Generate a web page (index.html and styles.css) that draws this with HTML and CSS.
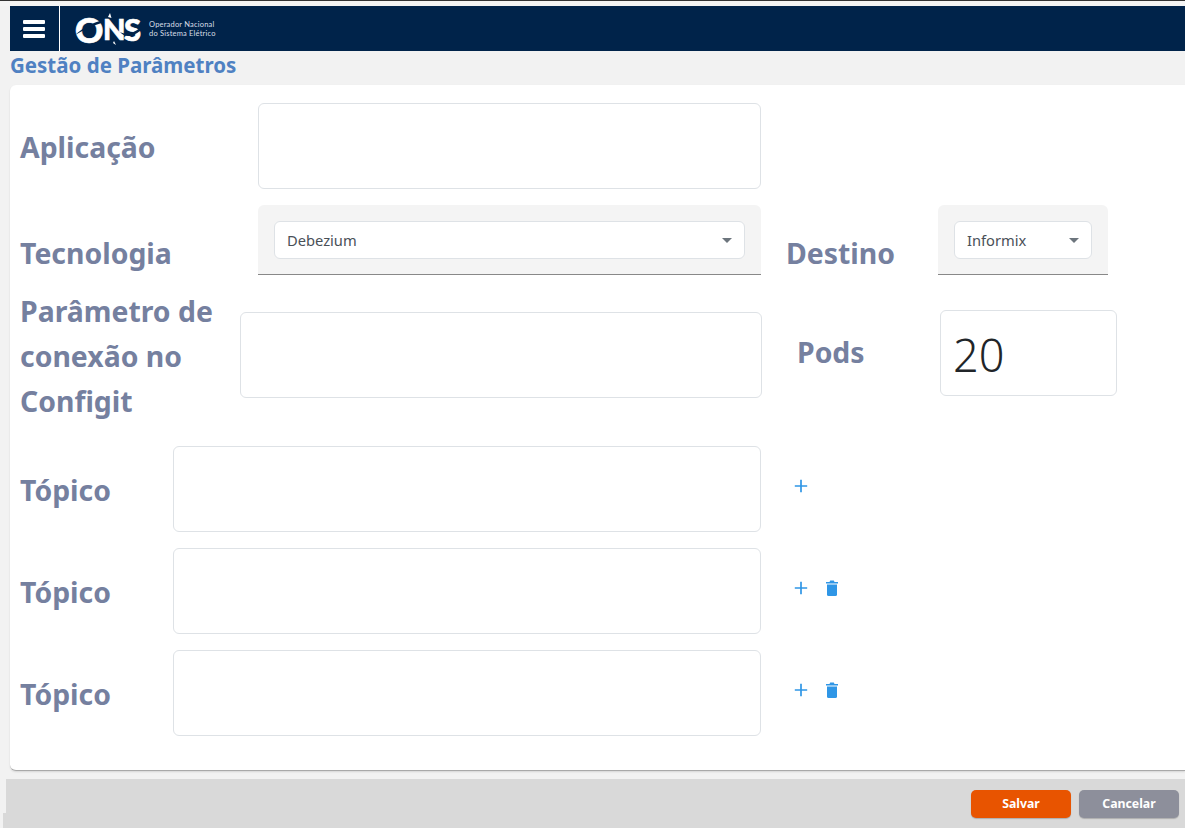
FILE: index.html
```html
<!DOCTYPE html>
<html lang="pt-BR">
<head>
<meta charset="utf-8">
<title>Gestão de Parâmetros</title>
<link rel="stylesheet" href="styles.css">
</head>
<body>
<div class="topline"></div>
<header class="navbar">
  <button class="menu-btn" aria-label="Menu">
    <svg width="22" height="18" viewBox="0 0 22 18"><rect y="0" width="22" height="4" rx="1" fill="#fff"/><rect y="7" width="22" height="4" rx="1" fill="#fff"/><rect y="14" width="22" height="4" rx="1" fill="#fff"/></svg>
  </button>
  <div class="logo">
    <div class="logo-mark">
      <span class="logo-o">O</span><span class="logo-n">N</span><span class="logo-s">S</span>
      <svg class="logo-swoosh" width="65" height="34" viewBox="0 0 65 34"><path d="M0 23 C9 15 17 11 28 8 L28 10.500 C18 13.500 9 18 0 23Z" fill="#00234a"/><path d="M33 5 L35 1 L36.500 6Z" fill="#fff"/><path d="M39 29 L41 33 L38 31Z" fill="#fff"/><path d="M45 20 C51 23 57 22 65 16 L65 19 C57 25 50 26 45 20Z" fill="#00234a"/></svg>
    </div>
    <div class="logo-text"><span>Operador Nacional</span><span>do Sistema Elétrico</span></div>
  </div>
</header>
<main class="page">
  <h1 class="title">Gestão de Parâmetros</h1>
  <section class="card">
    <div class="row row-app">
      <label class="label label-app">Aplicação</label>
      <input class="field field-app" type="text">
    </div>
    <div class="row row-tech">
      <label class="label label-tech">Tecnologia</label>
      <div class="select-box select-tech"><div class="select"><span>Debezium</span><i class="caret"></i></div></div>
      <label class="label label-dest">Destino</label>
      <div class="select-box select-dest"><div class="select"><span>Informix</span><i class="caret"></i></div></div>
    </div>
    <div class="row row-param">
      <label class="label label-param">Parâmetro de conexão no Configit</label>
      <input class="field field-param" type="text">
      <label class="label label-pods">Pods</label>
      <input class="field field-pods" type="text" value="20">
    </div>
    <div class="row row-topic">
      <label class="label label-topic">Tópico</label>
      <input class="field field-topic" type="text">
      <div class="actions">
        <svg class="icon" width="14" height="14" viewBox="0 0 14 14"><path d="M7 .8V13.200M.8 7H13.200" stroke="#2f96e6" stroke-width="1.700" fill="none"/></svg>
      </div>
    </div>
    <div class="row row-topic">
      <label class="label label-topic">Tópico</label>
      <input class="field field-topic" type="text">
      <div class="actions">
        <svg class="icon" width="14" height="14" viewBox="0 0 14 14"><path d="M7 .8V13.200M.8 7H13.200" stroke="#2f96e6" stroke-width="1.700" fill="none"/></svg>
        <svg class="icon icon-trash" width="14" height="16" viewBox="0 0 14 16"><path d="M1 2H4.500L5.200 .5H8.800L9.500 2H13V3.500H1Z" fill="#2f96e6"/><path d="M2 4.500H12V14.500A1.500 1.500 0 0 1 10.500 16H3.500A1.500 1.500 0 0 1 2 14.500Z" fill="#2f96e6"/></svg>
      </div>
    </div>
    <div class="row row-topic">
      <label class="label label-topic">Tópico</label>
      <input class="field field-topic" type="text">
      <div class="actions">
        <svg class="icon" width="14" height="14" viewBox="0 0 14 14"><path d="M7 .8V13.200M.8 7H13.200" stroke="#2f96e6" stroke-width="1.700" fill="none"/></svg>
        <svg class="icon icon-trash" width="14" height="16" viewBox="0 0 14 16"><path d="M1 2H4.500L5.200 .5H8.800L9.500 2H13V3.500H1Z" fill="#2f96e6"/><path d="M2 4.500H12V14.500A1.500 1.500 0 0 1 10.500 16H3.500A1.500 1.500 0 0 1 2 14.500Z" fill="#2f96e6"/></svg>
      </div>
    </div>
  </section>
</main>
<footer class="footer">
  <button class="btn btn-save">Salvar</button>
  <button class="btn btn-cancel">Cancelar</button>
</footer>
</body>
</html>
```
FILE: styles.css
```css
* { box-sizing: border-box; }
html, body { height: 100%; }
body {
  margin: 0;
  width: 1185px;
  height: 828px;
  overflow: hidden;
  background: #f2f2f2;
  font-family: "Noto Sans", "Open Sans", sans-serif;
  display: flex;
  flex-direction: column;
}
.topline { height: 6px; flex: none; border-top: 1px solid #333; background: #f4f4f4; }
.navbar {
  flex: none;
  margin-left: 10px;
  height: 45px;
  background: #00234a;
  display: flex;
  align-items: stretch;
}
.menu-btn {
  width: 50px;
  padding: 0 1px 0 0;
  border: 0;
  border-right: 1px solid #fff;
  background: transparent;
  display: flex;
  align-items: center;
  justify-content: center;
}
.logo { display: flex; align-items: center; margin-left: 15px; gap: 9px; }
.logo-mark {
  position: relative;
  width: 65px;
  height: 34px;
  display: flex;
  align-items: center;
  color: #fff;
  font-family: "Lato", sans-serif;
  font-weight: 900;
  font-size: 35px;
  line-height: 34px;
  -webkit-text-stroke: 0.7px #fff;
}
.logo-o { width: 28px; }
.logo-n { width: 21px; font-size: 29px; }
.logo-s { font-size: 31px; }
.logo-swoosh { position: absolute; left: 0; top: 0; }
.logo-text {
  display: flex;
  flex-direction: column;
  color: #d9dfe7;
  font-family: "Lato", sans-serif;
  font-size: 7.500px;
  line-height: 9px;
  letter-spacing: 0.200px;
}
.page { flex: none; margin-left: 10px; }
.title {
  margin: 0;
  height: 34px;
  padding-top: 1px;
  font-size: 20.500px;
  line-height: 27px;
  font-weight: 700;
  color: #4f81c2;
}
.card {
  height: 686px;
  background: #fff;
  border-radius: 6px 0 0 6px;
  border-bottom: 1px solid #a9a9a9;
  box-shadow: 0 1px 2px rgba(0, 0, 0, .12);
  padding: 18px 0 0 10px;
}
.row { display: flex; }
.label {
  font-size: 28.400px;
  line-height: 45px;
  font-weight: 700;
  color: #75809f;
}
.field {
  display: block;
  height: 86px;
  border: 1px solid #dee2e6;
  border-radius: 6px;
  background: #fff;
  padding: 6px 12px;
  outline: none;
}
.row-app { height: 102px; }
.label-app { width: 238px; padding-top: 22px; }
.field-app { width: 503px; }
.row-tech { height: 107px; }
.label-tech { width: 238px; padding-top: 26px; }
.select-box {
  height: 70px;
  padding: 16px;
  background: #f4f4f4;
  border-bottom: 1px solid #888;
  border-radius: 6px 6px 0 0;
}
.select-tech { width: 503px; }
.select-dest { width: 170px; }
.label-dest { width: 152px; margin-left: 25px; padding-top: 26px; }
.select {
  height: 38px;
  display: flex;
  align-items: center;
  justify-content: space-between;
  padding: 0 12px;
  background: #fff;
  border: 1px solid #dee2e6;
  border-radius: 6px;
  font-size: 14.700px;
  color: #495057;
}
.caret {
  width: 0;
  height: 0;
  border-left: 5px solid transparent;
  border-right: 5px solid transparent;
  border-top: 5px solid #6c757d;
}
.row-param { height: 156px; margin-top: -22px; }
.label-param { width: 220px; margin-top: -1px; }
.field-param { width: 522px; margin-top: 22px; }
.label-pods { width: 143px; margin-left: 35px; padding-top: 40px; }
.field-pods {
  width: 177px;
  margin-top: 20px;
  padding: 2px 12px 0;
  font-family: inherit;
  font-size: 45px;
  font-weight: 300;
  color: #212529;
}
.row-topic { height: 102px; }
.label-topic { width: 153px; padding-top: 22px; }
.field-topic { width: 588px; }
.actions {
  display: flex;
  align-items: center;
  gap: 17px;
  height: 80px;
  margin-left: 33px;
}
.icon-trash { margin-top: -1px; }
.footer {
  position: relative;
  flex: none;
  margin: 8px 0 0 6px;
  height: 50px;
  background: #d9d9d9;
  display: flex;
  justify-content: flex-end;
  gap: 8px;
  padding: 11px 6px 0 0;
}
.footer::before {
  content: "";
  position: absolute;
  left: -3px;
  bottom: 0;
  width: 3px;
  height: 16px;
  background: #d9d9d9;
}
.btn {
  width: 100px;
  height: 28px;
  border: 0;
  border-radius: 5px;
  color: #fff;
  font-family: inherit;
  font-size: 12.300px;
  font-weight: 700;
  line-height: 26px;
  padding: 0;
  box-shadow: 0 1px 1px rgba(0, 0, 0, .2);
}
.btn-save { background: #e85400; }
.btn-cancel { background: #8d8f9b; }
```
